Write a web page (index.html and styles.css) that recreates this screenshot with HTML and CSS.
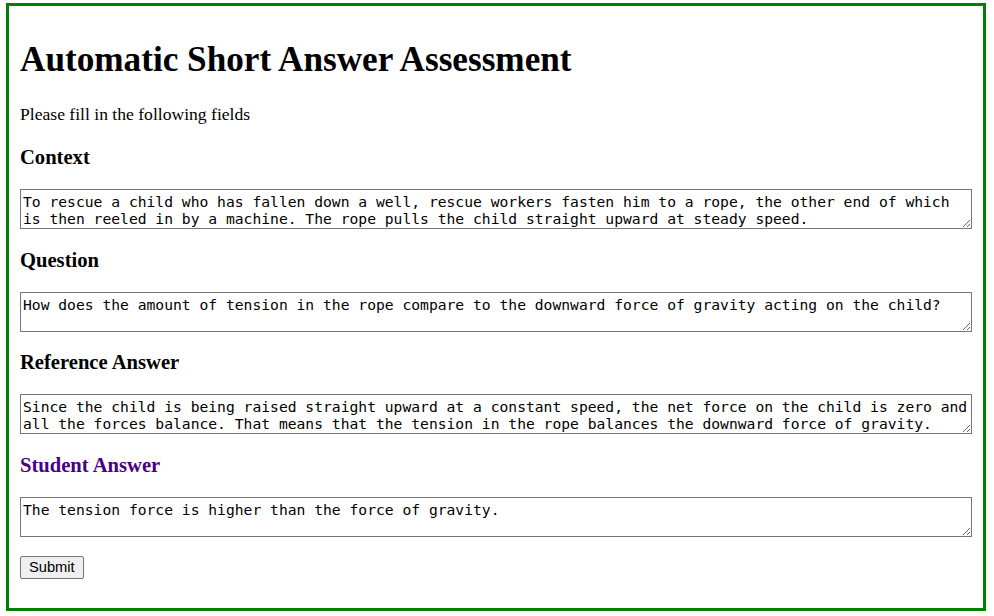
FILE: index.html
```html
<!DOCTYPE html>
<html>
<head>
<meta charset="utf-8">
<title>Automatic Short Answer Assessment</title>
<link rel="stylesheet" href="styles.css">
</head>
<body>
<div class="page">
  <h1 class="title">Automatic Short Answer Assessment</h1>
  <p class="intro">Please fill in the following fields</p>
  <form class="form">
    <h3 class="label">Context</h3>
    <textarea class="field" rows="2">To rescue a child who has fallen down a well, rescue workers fasten him to a rope, the other end of which is then reeled in by a machine. The rope pulls the child straight upward at steady speed.</textarea>
    <h3 class="label">Question</h3>
    <textarea class="field" rows="2">How does the amount of tension in the rope compare to the downward force of gravity acting on the child?</textarea>
    <h3 class="label">Reference Answer</h3>
    <textarea class="field" rows="2">Since the child is being raised straight upward at a constant speed, the net force on the child is zero and all the forces balance. That means that the tension in the rope balances the downward force of gravity.</textarea>
    <h3 class="label label-student">Student Answer</h3>
    <textarea class="field" rows="2">The tension force is higher than the force of gravity.</textarea>
    <div class="actions">
      <button type="button" class="submit">Submit</button>
    </div>
  </form>
</div>
</body>
</html>
```
FILE: styles.css
```css
html, body {
  margin: 0;
  padding: 0;
  background: #fff;
}
body {
  font-family: "Liberation Serif", "Times New Roman", serif;
  color: #000;
}
.page {
  margin: 3px 8px 5px 6px;
  border: 3px solid #008000;
  padding: 10px 11px 29px 11px;
}
.title {
  font-size: 35.2px;
  font-weight: bold;
  margin: 23.6px 0 24px 0;
}
.intro {
  font-size: 17.6px;
  margin: 17.6px 0 21.7px 0;
}
.form {
  margin: 0;
}
.label {
  font-size: 20.6px;
  font-weight: bold;
  margin: 19.7px 0 19.8px 0;
}
.label-student {
  color: #4b0082;
}
.field {
  display: block;
  box-sizing: border-box;
  width: 100%;
  font-family: "DejaVu Sans Mono", monospace;
  font-size: 14.667px;
  line-height: 17px;
  padding: 3px 2px 1px 2px;
  border: 1px solid #767676;
  height: 40px;
  margin: 0;
  resize: vertical;
}
.actions {
  display: flex;
  margin-top: 19px;
}
.submit {
  box-sizing: border-box;
  height: 23px;
  font-family: "Liberation Sans", Arial, sans-serif;
  font-size: 14.667px;
  padding: 1px 8px;
  border: 1px solid #767676;
  border-radius: 2px;
  background: #efefef;
  color: #000;
}
```
